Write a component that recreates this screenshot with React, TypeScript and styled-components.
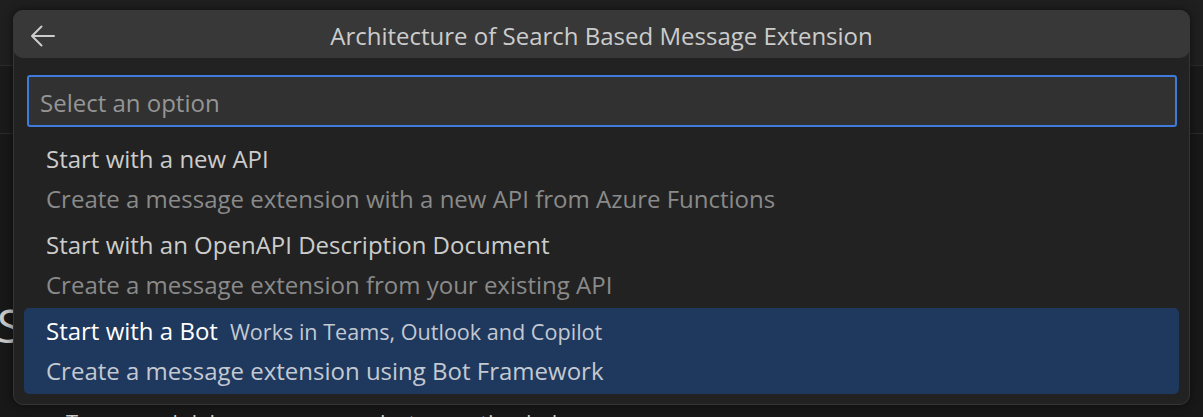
import React from "react";
import styled, { createGlobalStyle } from "styled-components";

const Global = createGlobalStyle`
  html, body { margin: 0; padding: 0; background: #181818; }
  body { width: 1203px; height: 417px; overflow: hidden; font-family: "Open Sans", "Noto Sans", sans-serif; }
`;

const Page = styled.div`
  position: relative;
  width: 1203px;
  height: 417px;
  overflow: hidden;
  background: #181818;
  display: flex;
  flex-direction: column;
`;

const TopStrip = styled.div`
  height: 65px;
  flex: none;
  background: #1f1f1f;
  border-bottom: 1px solid #2b2b2b;
`;

const TabStrip = styled.div`
  height: 67px;
  flex: none;
  background: #1a1a1a;
  border-bottom: 1px solid #2a2a2a;
`;

const Content = styled.div`
  display: flex;
  flex-direction: column;
  padding-top: 168px;
  color: #cccccc;
`;

const BigHeading = styled.div`
  font-size: 46px;
  line-height: 46px;
  margin-left: -3px;
  color: #c8c8c8;
`;

const BodyLine = styled.div`
  margin-top: 59px;
  margin-left: 66px;
  font-size: 22px;
  line-height: 30px;
  color: #cccccc;
`;

const Dialog = styled.div`
  position: absolute;
  top: 10px;
  left: 13px;
  width: 1177px;
  height: 395px;
  box-sizing: border-box;
  background: #222222;
  border: 1px solid #353535;
  border-radius: 10px;
  box-shadow: 0 0 10px rgba(0, 0, 0, 0.55);
  display: flex;
  flex-direction: column;
`;

const TitleBar = styled.div`
  height: 48px;
  margin: -1px -1px 0;
  flex: none;
  background: #383838;
  border-radius: 10px;
  display: grid;
  grid-template-columns: 60px 1fr 60px;
  align-items: center;
`;

const BackButton = styled.div`
  display: flex;
  align-items: center;
  justify-content: center;
  padding-top: 3px;
`;

const Title = styled.div`
  text-align: center;
  font-size: 24px;
  color: #cccccc;
  padding-top: 2px;
`;

const InputBox = styled.div`
  margin: 17px 12px 0 13px;
  height: 52px;
  box-sizing: border-box;
  background: #313131;
  border: 2px solid #3f7bd8;
  border-radius: 3px;
  display: flex;
  align-items: center;
  padding-left: 11px;
  padding-top: 2px;
  font-size: 24px;
  color: #959595;
`;

const List = styled.div`
  margin-top: 9px;
  padding: 0 10px;
  display: flex;
  flex-direction: column;
`;

const Item = styled.div<{ $selected?: boolean }>`
  height: 86px;
  box-sizing: border-box;
  padding: 3px 22px 0;
  border-radius: 5px;
  background: ${(p) => (p.$selected ? "#1f385d" : "transparent")};
  display: flex;
  flex-direction: column;
`;

const LabelRow = styled.div`
  display: flex;
  align-items: baseline;
  gap: 12px;
  height: 40px;
  line-height: 40px;
`;

const Label = styled.span<{ $selected?: boolean }>`
  font-size: 24px;
  color: ${(p) => (p.$selected ? "#ffffff" : "#cccccc")};
`;

const InlineDesc = styled.span`
  font-size: 21.6px;
  color: #c3c9d2;
`;

const Desc = styled.div<{ $selected?: boolean }>`
  font-size: 24px;
  line-height: 40px;
  color: ${(p) => (p.$selected ? "#c3c9d2" : "#8a8a8a")};
`;

const items = [
  {
    label: "Start with a new API",
    desc: "Create a message extension with a new API from Azure Functions",
  },
  {
    label: "Start with an OpenAPI Description Document",
    desc: "Create a message extension from your existing API",
  },
  {
    label: "Start with a Bot",
    inline: "Works in Teams, Outlook and Copilot",
    desc: "Create a message extension using Bot Framework",
    selected: true,
  },
];

export default function App() {
  return (
    <Page>
      <Global />
      <TopStrip />
      <TabStrip />
      <Content>
        <BigHeading>S</BigHeading>
        <BodyLine>To run and debug your app, select an option below</BodyLine>
      </Content>
      <Dialog>
        <TitleBar>
          <BackButton>
            <svg width="26" height="22" viewBox="0 0 26 22" fill="none">
              <path
                d="M2 11 H24 M11.5 1.5 L2 11 L11.5 20.5"
                stroke="#cccccc"
                strokeWidth="2"
                strokeLinecap="round"
                strokeLinejoin="round"
              />
            </svg>
          </BackButton>
          <Title>Architecture of Search Based Message Extension</Title>
          <div />
        </TitleBar>
        <InputBox>Select an option</InputBox>
        <List>
          {items.map((it) => (
            <Item key={it.label} $selected={it.selected}>
              <LabelRow>
                <Label $selected={it.selected}>{it.label}</Label>
                {it.inline && <InlineDesc>{it.inline}</InlineDesc>}
              </LabelRow>
              <Desc $selected={it.selected}>{it.desc}</Desc>
            </Item>
          ))}
        </List>
      </Dialog>
    </Page>
  );
}
